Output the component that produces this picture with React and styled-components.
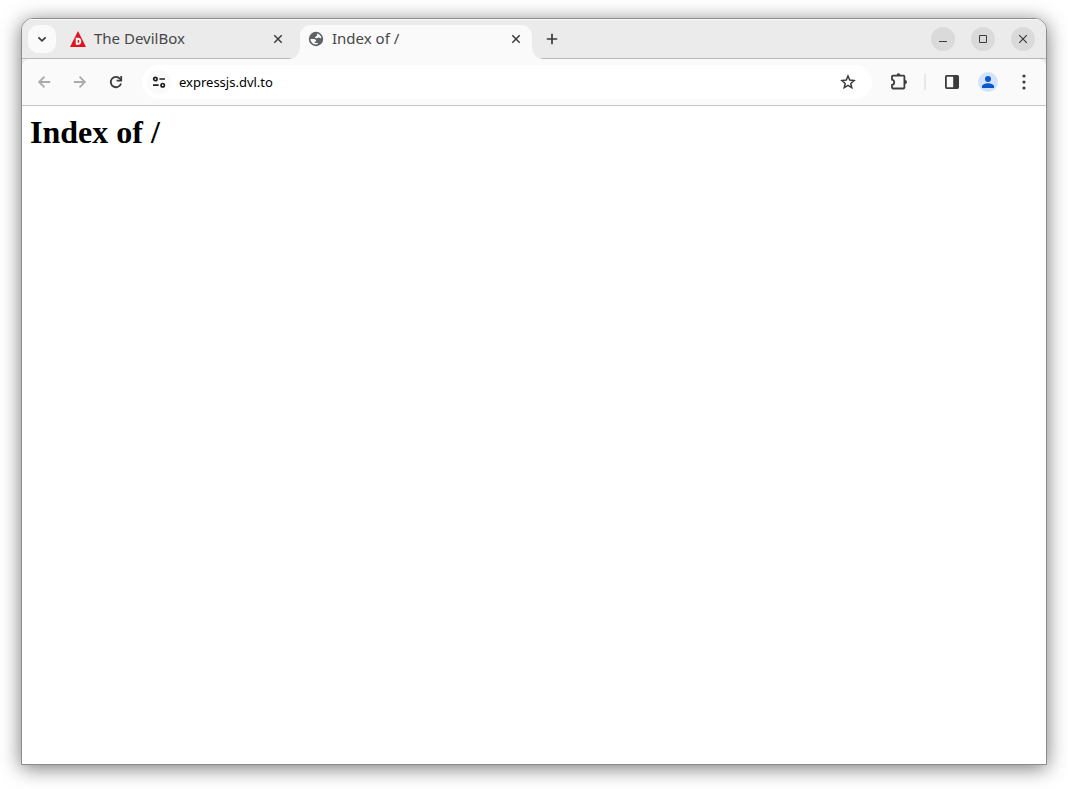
import React, { useState } from 'react'
import styled, { createGlobalStyle } from 'styled-components'


const GlobalStyle = createGlobalStyle`
  * {
    box-sizing: border-box;
  }

  body {
    margin: 0;
    background: #fff;
    font-family: "Noto Sans", "Open Sans", sans-serif;
  }
`

const Desktop = styled.div`
  display: flex;
  min-height: 100vh;
  padding: 18px 21px 24px;
`

const Window = styled.div`
  display: flex;
  flex: 1;
  flex-direction: column;
  min-width: 0;
  overflow: hidden;
  background: #fff;
  border: 1px solid #8c8c8c;
  border-radius: 12px 12px 0 0;
  box-shadow: 0 3px 20px rgba(0, 0, 0, 0.54);
`

const TabStrip = styled.header`
  display: flex;
  align-items: flex-end;
  gap: 6px;
  padding: 6px 11px 0 6px;
  background: #ebebeb;
  border-bottom: 1px solid #bababa;
  box-shadow: inset 0 1px #f9f9f9;
`

const IconButton = styled.button`
  display: flex;
  flex: none;
  align-items: center;
  justify-content: center;
  width: 28px;
  height: 28px;
  padding: 0;
  color: ${props => props.$muted ? '#ababab' : '#3c3c3c'};
  background: ${props => props.$raised ? '#fafafa' : 'transparent'};
  border: none;
  border-radius: 10px;
`

const TabSlot = styled.div`
  display: flex;
  align-items: center;
  height: 33px;
  padding-bottom: 5px;
`

const Tab = styled.div`
  position: relative;
  display: flex;
  flex: 0 1 232px;
  align-items: center;
  gap: 8px;
  height: ${props => props.$active ? 34 : 33}px;
  margin-bottom: ${props => props.$active ? -1 : 0}px;
  padding: 0 8px ${props => props.$active ? 6 : 5}px;
  background: ${props => props.$active ? '#fafafa' : 'transparent'};
  border-radius: 10px 10px 0 0;

  &::before,
  &::after {
    content: ${props => props.$active ? '""' : 'none'};
    position: absolute;
    bottom: 0;
    width: 10px;
    height: 10px;
  }

  &::before {
    right: 100%;
    background: radial-gradient(circle at 0 0, transparent 9px, #fafafa 10px);
  }

  &::after {
    left: 100%;
    background: radial-gradient(circle at 100% 0, transparent 9px, #fafafa 10px);
  }
`

const TabTitle = styled.button`
  display: flex;
  flex: 1;
  align-items: center;
  gap: 8px;
  min-width: 0;
  padding: 0;
  overflow: hidden;
  color: #474747;
  font: 15px/20px "Noto Sans", "Open Sans", sans-serif;
  white-space: nowrap;
  background: none;
  border: none;
`

const TabLabel = styled.span`
  padding-bottom: 2px;
`

const CloseTab = styled(IconButton)`
  width: 16px;
  height: 16px;
`

const WindowControls = styled.div`
  display: flex;
  gap: 16px;
  align-items: center;
  height: 33px;
  margin-left: auto;
  padding-bottom: 5px;
`

const ControlButton = styled(IconButton)`
  width: 24px;
  height: 24px;
  background: #dadada;
  border-radius: 50%;
`

const ToolbarBack = styled.div`
  background: #ebebeb;
`

const Toolbar = styled.nav`
  display: flex;
  align-items: center;
  gap: 8px;
  height: 47px;
  padding: 0 8px;
  background: #fafafa;
  border-bottom: 1px solid #c4c4c4;
  border-radius: 8px 8px 0 0;
`

const AddressBar = styled.form`
  display: flex;
  flex: 1;
  align-items: center;
  gap: 8px;
  height: 34px;
  min-width: 0;
  margin: 0 4px;
  padding: 0 10px 0 5px;
  background: #fff;
  border-radius: 17px;
`

const SiteButton = styled(IconButton)`
  width: 24px;
  height: 24px;
  color: #1f1f1f;
  background: #fafafa;
  border-radius: 50%;
`

const AddressInput = styled.input`
  flex: 1;
  min-width: 0;
  padding: 0;
  color: #000;
  font: 13px/20px "Noto Sans", "Open Sans", sans-serif;
  background: none;
  border: none;
  outline: none;
`

const Divider = styled.span`
  width: 2px;
  height: 16px;
  margin: 0 4px;
  background: #e8e8e8;
`

const Page = styled.main`
  flex: 1;
  padding: 8px;
`

const Heading = styled.h1`
  margin: 0;
  color: #000;
  font: bold 32px/37px "Liberation Serif", serif;
`


const Line = ({ size = 16, width = 2, children }) => (
  <svg width={size} height={size} viewBox={`0 0 ${size} ${size}`} fill="none" stroke="currentColor" strokeWidth={width} aria-hidden="true">
    {children}
  </svg>
)

const DevilIcon = () => (
  <svg width="16" height="16" viewBox="0 0 16 16" aria-hidden="true">
    <path d="M8 0L16 16H0Z" fill="#e3131b" />
    <path d="M6.7 7.7H8A2.3 2.6 0 0 1 8 12.9H6.7Z" fill="none" stroke="#fff" strokeWidth="1.9" />
  </svg>
)

const GlobeIcon = () => (
  <svg width="16" height="16" viewBox="0 0 16 16" aria-hidden="true">
    <circle cx="8" cy="8" r="7.2" fill="#5f6368" />
    <path d="M8.8 2.6C11.2 2.9 13 4.8 13.4 7C12.6 7.6 11.8 7.3 11.2 6.6C10.2 6.6 9.6 7.5 8.2 7.3C6.8 7 6.8 6 7.8 5.4L9.2 4.6Z" fill="#fafafa" />
    <path d="M2.5 8H5.8C7.6 8 8.3 9 8.1 10.6H6.7V12H9.8V13.1C6 14.4 2.5 11.6 2.5 8Z" fill="#fafafa" />
  </svg>
)

const tabs = [
  { title: 'The DevilBox', icon: <DevilIcon /> },
  { title: 'Index of /', icon: <GlobeIcon /> }
]


function App() {
  const [active, setActive] = useState(1)
  const [address, setAddress] = useState('expressjs.dvl.to')

  return (
    <Desktop>
      <GlobalStyle />
      <Window>
        <TabStrip>
          <TabSlot>
            <IconButton $raised aria-label="Search tabs">
              <Line width={1.8}><path d="M4.4 6.4L8 9.8L11.6 6.4" /></Line>
            </IconButton>
          </TabSlot>
          {tabs.map((tab, index) => (
            <Tab key={tab.title} $active={index === active}>
              <TabTitle onClick={() => setActive(index)}>
                {tab.icon}
                <TabLabel>{tab.title}</TabLabel>
              </TabTitle>
              <CloseTab aria-label="Close tab">
                <Line width={1.5}><path d="M4.3 4.3L11.7 11.7M11.7 4.3L4.3 11.7" /></Line>
              </CloseTab>
            </Tab>
          ))}
          <TabSlot>
            <IconButton aria-label="New tab">
              <Line width={1.7}><path d="M8 2.8V13.2M2.8 8H13.2" /></Line>
            </IconButton>
          </TabSlot>
          <WindowControls>
            <ControlButton aria-label="Minimize">
              <Line width={1}><path d="M4 10.5H12" /></Line>
            </ControlButton>
            <ControlButton aria-label="Maximize">
              <Line width={1}><path d="M4.5 4.5H11.5V11.5H4.5Z" /></Line>
            </ControlButton>
            <ControlButton aria-label="Close">
              <Line width={1.2}><path d="M4.2 4.2L11.8 11.8M11.8 4.2L4.2 11.8" /></Line>
            </ControlButton>
          </WindowControls>
        </TabStrip>

        <ToolbarBack>
          <Toolbar>
            <IconButton $muted aria-label="Back">
              <Line width={1.8}><path d="M14.2 8H3.4M8.5 2.6L3.1 8L8.5 13.4" /></Line>
            </IconButton>
            <IconButton $muted aria-label="Forward">
              <Line width={1.8}><path d="M1.8 8H12.6M7.5 2.6L12.9 8L7.5 13.4" /></Line>
            </IconButton>
            <IconButton aria-label="Reload">
              <Line width={1.8}>
                <path d="M13 9.4A5.2 5.2 0 1 1 12 4.7L13 6" />
                <path d="M13.2 1.9V6.7H8.6" />
              </Line>
            </IconButton>
            <AddressBar onSubmit={event => event.preventDefault()}>
              <SiteButton type="button" aria-label="Site information">
                <Line width={1.7}>
                  <circle cx="4.4" cy="5" r="1.7" />
                  <path d="M8.4 5H14M2 11.2H7.6" />
                  <circle cx="11.7" cy="11.2" r="1.7" />
                </Line>
              </SiteButton>
              <AddressInput
                aria-label="Address"
                value={address}
                onChange={event => setAddress(event.target.value)}
              />
              <IconButton type="button" aria-label="Bookmark">
                <Line width={1.5}>
                  <path d="M8 2L9.7 6.1L14.1 6.5L10.8 9.4L11.8 13.7L8 11.4L4.2 13.7L5.2 9.4L1.9 6.5L6.3 6.1Z" />
                </Line>
              </IconButton>
            </AddressBar>
            <IconButton aria-label="Extensions">
              <Line size={20} width={1.8}>
                <path d="M4.9 3.7H15.5Q16.4 3.7 16.4 4.6V15.6Q16.4 16.5 15.5 16.5H4.9Q4 16.5 4 15.6V13C7 12.5 7 8.2 4 7.7V4.6Q4 3.7 4.9 3.7Z" />
                <path d="M8.6 3.2A1.9 1.9 0 0 1 12.4 3.2ZM16.9 8A2.1 2.1 0 0 1 16.9 12.2Z" fill="currentColor" stroke="none" />
              </Line>
            </IconButton>
            <Divider />
            <IconButton aria-label="Side panel">
              <Line width={1.8}>
                <rect x="1.9" y="1.9" width="12.2" height="12.2" rx="0.8" />
                <path d="M9.2 2H14V14H9.2Z" fill="currentColor" stroke="none" />
              </Line>
            </IconButton>
            <IconButton aria-label="Profile">
              <svg width="20" height="20" viewBox="0 0 20 20" aria-hidden="true">
                <circle cx="10" cy="10" r="10" fill="#d3e3fd" />
                <circle cx="10" cy="7" r="3" fill="#0b57d0" />
                <path d="M4 16V14.2C4 12.2 8 11.2 10 11.2S16 12.2 16 14.2V16Z" fill="#0b57d0" />
              </svg>
            </IconButton>
            <IconButton aria-label="Menu">
              <svg width="16" height="16" viewBox="0 0 16 16" fill="currentColor" aria-hidden="true">
                <circle cx="8" cy="2" r="1.6" />
                <circle cx="8" cy="8" r="1.6" />
                <circle cx="8" cy="14" r="1.6" />
              </svg>
            </IconButton>
          </Toolbar>
        </ToolbarBack>

        <Page>
          <Heading>Index of /</Heading>
        </Page>
      </Window>
    </Desktop>
  )
}

export default App
